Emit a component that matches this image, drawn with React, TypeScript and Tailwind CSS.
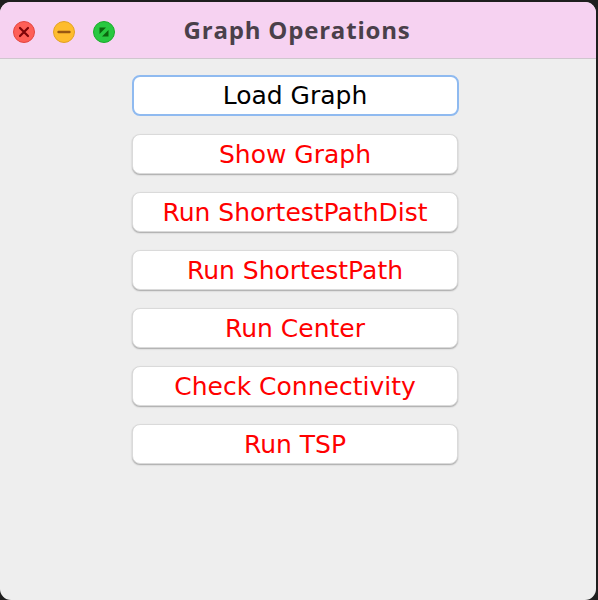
import React from 'react';

const buttons = [
  'Show Graph',
  'Run ShortestPathDist',
  'Run ShortestPath',
  'Run Center',
  'Check Connectivity',
  'Run TSP',
];

const Lights: React.FC = () => (
  <div className="flex items-center gap-[18px] pl-[13px] pt-[3px]">
    <svg width="22" height="22" viewBox="0 0 22 22">
      <circle cx="11" cy="11" r="10.5" fill="#fe5f57" stroke="#e2463f" strokeWidth="1" />
      <path d="M7 7l8 8M15 7l-8 8" stroke="#7e0508" strokeWidth="2.2" strokeLinecap="round" />
    </svg>
    <svg width="22" height="22" viewBox="0 0 22 22">
      <circle cx="11" cy="11" r="10.5" fill="#febc2e" stroke="#e1a123" strokeWidth="1" />
      <path d="M5.5 11h11" stroke="#985712" strokeWidth="2.4" strokeLinecap="round" />
    </svg>
    <svg width="22" height="22" viewBox="0 0 22 22">
      <circle cx="11" cy="11" r="10.5" fill="#28c840" stroke="#1aab29" strokeWidth="1" />
      <path d="M6.5 6.5h6.5l-6.5 6.5z" fill="#0b650d" />
      <path d="M15.5 15.5h-6.5l6.5-6.5z" fill="#0b650d" />
    </svg>
  </div>
);

export default function App() {
  return (
    <div className="w-[598px] h-[600px] bg-[#1e1e1e] pt-[2px] overflow-hidden">
      <div className="w-[596px] h-[598px] rounded-[11px] overflow-hidden bg-[#eeeeee] flex flex-col">
        <div className="relative h-[57px] shrink-0 bg-[#f6d2f1] border-b border-[#cfc6ce] flex items-center">
          <Lights />
          <div
            className="absolute inset-0 flex items-center justify-center pr-[2px] pb-[1px] text-[24px] tracking-[0.8px] font-bold text-[#4a404a]"
            style={{ fontFamily: '"Open Sans", "Noto Sans", sans-serif' }}
          >
            Graph Operations
          </div>
        </div>
        <div
          className="flex flex-col items-center gap-[18px] pt-[16px] pr-[6px]"
          style={{ fontFamily: '"DejaVu Sans", sans-serif' }}
        >
          <button className="w-[327px] h-[41px] rounded-[8px] bg-white border-[2.5px] border-[#8fbaf0] text-[25px] text-black leading-none">
            Load Graph
          </button>
          {buttons.map((b) => (
            <button
              key={b}
              className="w-[326px] h-[40px] rounded-[8px] bg-white border border-[#dadada] shadow-[0_1px_1.5px_rgba(0,0,0,0.3)] text-[25px] text-[#ff0000] leading-none"
            >
              {b}
            </button>
          ))}
        </div>
      </div>
    </div>
  );
}
